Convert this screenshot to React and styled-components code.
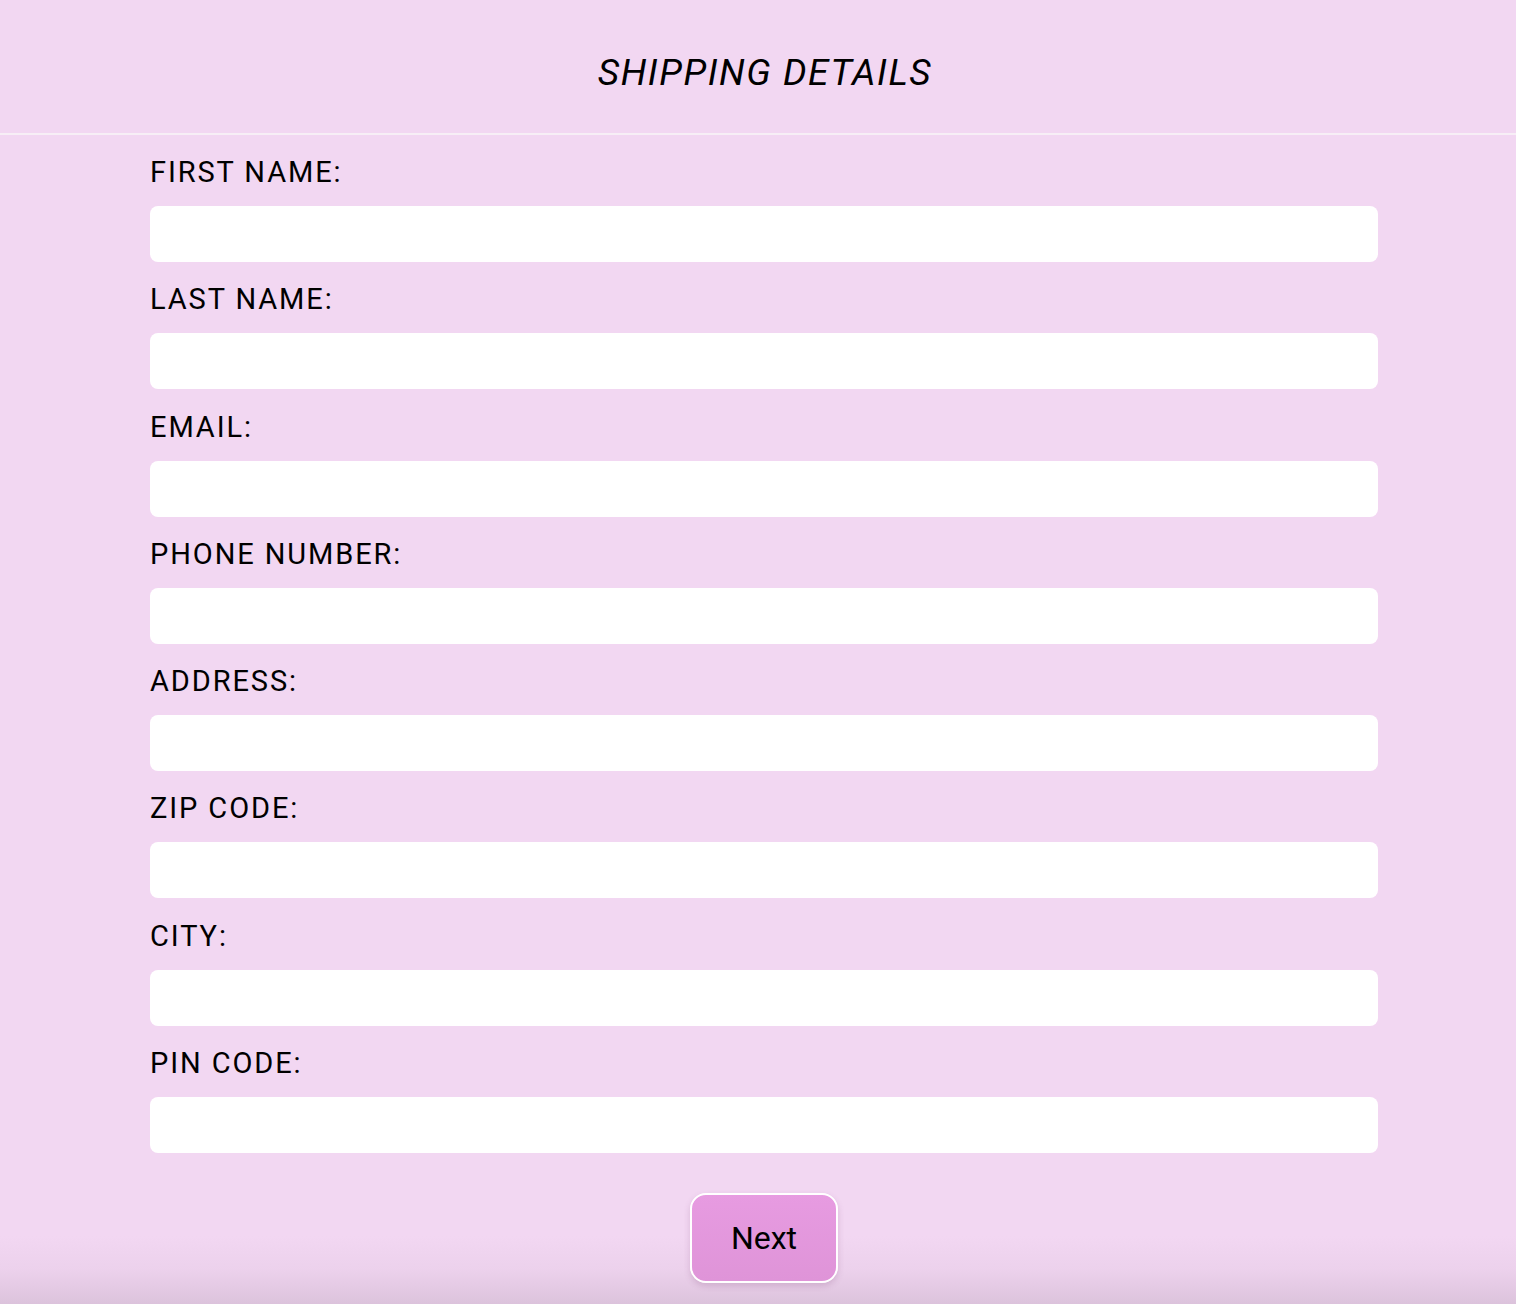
import styled, { createGlobalStyle } from "styled-components"

const GlobalStyle = createGlobalStyle`
  html, body {
    margin: 0;
    padding: 0;
  }
  body {
    font-family: Roboto, "Liberation Sans", sans-serif;
    background: #f2d7f2;
  }
`

const fields = [
  "FIRST NAME:",
  "LAST NAME:",
  "EMAIL:",
  "PHONE NUMBER:",
  "ADDRESS:",
  "ZIP CODE:",
  "CITY:",
  "PIN CODE:",
]

const App = () => {
  return (
    <StPage>
      <GlobalStyle />
      <StHeader>
        <h1>SHIPPING DETAILS</h1>
      </StHeader>
      <StForm onSubmit={(e) => e.preventDefault()}>
        {fields.map((label) => (
          <StField key={label}>
            <label>{label}</label>
            <input type="text" />
          </StField>
        ))}
        <StActions>
          <StButton type="submit">Next</StButton>
        </StActions>
      </StForm>
    </StPage>
  )
}

const StPage = styled.div`
  min-height: 1304px;
  box-sizing: border-box;
  padding-left: 12px;
  background: linear-gradient(
    to bottom,
    #f2d7f2 0,
    #f2d7f2 1236px,
    #ecd1ec 1270px,
    #dcc3dc 1304px
  );
`

const StHeader = styled.header`
  height: 135px;
  box-sizing: border-box;
  padding-top: 12px;
  margin-left: -12px;
  display: flex;
  align-items: center;
  justify-content: center;
  border-bottom: 2px solid #f7eef6;
  h1 {
    margin: 0;
    padding-left: 14px;
    font-size: 37px;
    font-weight: 400;
    font-style: italic;
    letter-spacing: 1.6px;
    color: #000;
  }
`

const StForm = styled.form`
  width: 1228px;
  margin: 0 auto;
  padding-top: 21px;
  display: flex;
  flex-direction: column;
  gap: 21.3px;
`

const StField = styled.div`
  display: flex;
  flex-direction: column;
  gap: 17px;
  label {
    font-size: 29px;
    line-height: 33px;
    letter-spacing: 1.9px;
    color: #000;
  }
  input {
    height: 56px;
    border: none;
    border-radius: 8px;
    background: #fff;
    outline: none;
    padding: 0 14px;
    font-size: 20px;
    box-sizing: border-box;
  }
`

const StActions = styled.div`
  display: flex;
  justify-content: center;
  padding-top: 18.7px;
`

const StButton = styled.button`
  width: 148px;
  height: 90px;
  border: 2px solid #fff;
  border-radius: 16px;
  background: linear-gradient(to bottom, #e79be1, #df94d8);
  box-shadow: 0 3px 6px rgba(120, 60, 110, 0.2);
  font-family: Roboto, "Liberation Sans", sans-serif;
  font-size: 32px;
  color: #000;
  cursor: pointer;
`

export default App
